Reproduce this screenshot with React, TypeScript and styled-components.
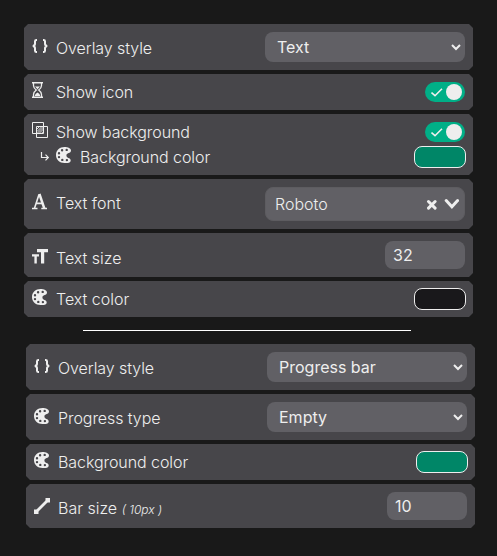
import React from "react";
import styled, { createGlobalStyle } from "styled-components";

const GlobalStyle = createGlobalStyle`
  * { box-sizing: border-box; }
  body { margin: 0; background: #191919; }
`;

const Page = styled.main`
  width: 497px;
  height: 556px;
  padding: 24px 22px 0 24px;
  overflow: hidden;
  background: #191919;
  color: #eee;
  font: 300 16px/24px Inter, sans-serif;
`;

const Panel = styled.section<{ $shift?: number }>`
  width: 449px;
  margin-left: ${(p) => p.$shift ?? 0}px;
  display: flex;
  flex-direction: column;
  gap: 4px;
`;

const Row = styled.div<{ $height: number }>`
  height: ${(p) => p.$height}px;
  padding: 0 8px;
  clip-path: polygon(4px 0, calc(100% - 4px) 0, 100% 4px, 100% calc(100% - 4px), calc(100% - 4px) 100%, 4px 100%, 0 calc(100% - 4px), 0 4px);
  background: #47464a;
`;

const Line = styled.div<{ $top?: number; $indent?: number }>`
  display: flex;
  align-items: flex-start;
  padding-top: ${(p) => p.$top ?? 0}px;
  padding-left: ${(p) => p.$indent ?? 0}px;
`;

const IconSlot = styled.span<{ $top?: number; $width?: number }>`
  flex: none;
  width: ${(p) => p.$width ?? 24}px;
  height: 16px;
  margin-top: ${(p) => p.$top ?? 0}px;
  svg { display: block; }
`;

const Label = styled.span<{ $top?: number; $tight?: boolean }>`
  flex: 1;
  margin-top: ${(p) => p.$top ?? 0}px;
  letter-spacing: ${(p) => (p.$tight ? "-0.07px" : "0")};
  white-space: pre;
`;

const Note = styled.em`
  font-size: 12px;
`;

const Field = styled.div<{ $width: number; $height: number; $light?: boolean }>`
  display: flex;
  align-items: center;
  flex: none;
  width: ${(p) => p.$width}px;
  height: ${(p) => p.$height}px;
  padding: 0 ${(p) => (p.$light ? 5 : 4)}px 0 ${(p) => (p.$light ? 9 : p.$width === 80 ? 8 : 12)}px;
  border-radius: 8px;
  border: ${(p) => (p.$light ? "1px solid #5d5c60" : "0")};
  background: #616065;
  font-weight: ${(p) => (p.$light ? 300 : 400)};
  span { flex: 1; }
`;

const Switch = styled.div`
  display: flex;
  align-items: center;
  justify-content: space-between;
  flex: none;
  width: 40px;
  height: 20px;
  padding: 0 3px 0 6px;
  border-radius: 10px;
  background: #00af87;
`;

const Knob = styled.i`
  width: 16px;
  height: 16px;
  border-radius: 50%;
  background: #eee;
`;

const Swatch = styled.div<{ $color: string }>`
  flex: none;
  width: 52px;
  height: 22px;
  margin-right: -1px;
  border: 1px solid #eee;
  border-radius: 8px;
  background: ${(p) => p.$color};
`;

const Divider = styled.hr`
  width: 328px;
  height: 1px;
  margin: 13px 0 13px 59px;
  border: 0;
  background: #fff;
`;

const Braces = () => (
  <svg width="16" height="16" viewBox="0 0 16 16" fill="none" stroke="#eee" strokeWidth="2">
    <path d="M5 1.9H4.500Q3 1.900 3 3.300V5.800Q3 7.700 .8 8Q3 8.300 3 10.200V12.700Q3 14.100 4.500 14.100H5M11 1.900h.5q1.500 0 1.500 1.400v2.500q0 1.900 2.200 2.200q-2.200.3-2.200 2.200v2.500q0 1.400-1.500 1.400H11" />
  </svg>
);

const Hourglass = () => (
  <svg width="12" height="16" viewBox="0 0 12 16" fill="none" stroke="#eee">
    <path d="M0 .8h11M0 15.200h11" strokeWidth="1.6" />
    <path d="M1.500 1v2.500Q1.500 6 4.300 8Q1.500 10 1.500 12.500V15M9.500 1v2.500Q9.500 6 6.700 8q2.800 2 2.800 4.500V15" strokeWidth="1.3" />
    <path d="M3 4.500h5L5.500 7.200zM2.700 14q.3-2.500 2.800-3.500q2.500 1 2.800 3.500z" fill="#eee" stroke="none" />
  </svg>
);

const Overlap = () => (
  <svg width="16" height="16" viewBox="0 0 16 16" fill="none" stroke="#eee">
    <path d="M.5.5h11v11H.5zM4.500 4.500h11v11h-11z" />
    <path d="M5 7l2-2M5 9.500L9.500 5M5 11.500L11.500 5M7 11.500L11.500 7M9.300 11.500l2.200-2.200" strokeWidth=".9" />
  </svg>
);

const SubArrow = () => (
  <svg width="10" height="11" viewBox="0 0 10 11" fill="none" stroke="#eee" strokeWidth="1.2">
    <path d="M1.500 0v5.500h6.500M5.500 2.700l2.800 2.800L5.500 8.300" />
  </svg>
);

const LetterA = () => (
  <svg width="16" height="17" viewBox="0 0 16 17" fill="none" stroke="#eee">
    <path d="M2.500 15.300L7 1.500M4.200 10.400h6.800" strokeWidth="1.6" />
    <path d="M7.400 1L12.300 15.300" strokeWidth="2.5" />
    <path d="M0 15.500h5.500M9.300 15.500H15" strokeWidth="1.7" />
  </svg>
);

const TextSize = () => (
  <svg width="16" height="16" viewBox="0 0 16 16" fill="#eee">
    <path d="M5 0h11v3.200h-3.800V14.500H9V3.200H5zM0 5.200h7v2.200H4.800V14.500H2.400V7.400H0z" />
  </svg>
);

const BarSize = () => (
  <svg width="16" height="16" viewBox="0 0 16 16" fill="#eee" stroke="#eee">
    <path d="M2.500 13.500L13.500 2.500" strokeWidth="2.800" />
    <path d="M11.500 0H16v4.500h-2.500L11.500 2.500zM0 11.500h2.500l2 2V16H0z" stroke="none" />
  </svg>
);

const Palette = () => (
  <svg width="16" height="16" viewBox="0 0 16 16">
    <path
      fill="#eee"
      fillRule="evenodd"
      d="M8.500 0C3.500 0 0 3.500 0 8s3.500 8 8.500 8h3.200c1.700 0 3-1.100 3-2.500 0-1.500-1.200-2.100-2.300-2.500-1.200-.5-2-1.300-2-2.500s.9-2 2.200-2.400c1.300-.4 2.400-1 2.400-2.500C15 1.300 12 0 8.500 0zM6.100 2.100a1.200 1.200 0 1 1 0 2.400 1.200 1.200 0 0 1 0-2.400zM10.700 1.700a1.200 1.200 0 1 1 0 2.400 1.200 1.200 0 0 1 0-2.400zM3 5.100a1.200 1.200 0 1 1 0 2.400 1.200 1.200 0 0 1 0-2.400zM3 8.900a1.200 1.200 0 1 1 0 2.400 1.200 1.200 0 0 1 0-2.400zM6.300 11.700a1.200 1.200 0 1 1 0 2.400 1.200 1.200 0 0 1 0-2.400zM10.900 11.900a1.200 1.200 0 1 1 0 2.400 1.200 1.200 0 0 1 0-2.400z"
    />
  </svg>
);

const SelectArrow = () => (
  <svg width="10" height="7" viewBox="0 0 10 7" fill="none" stroke="#eee" strokeWidth="2">
    <path d="M1 1l4 4 4-4" />
  </svg>
);

const Check = () => (
  <svg width="12" height="9" viewBox="0 0 12 9" fill="none" stroke="#eee" strokeWidth="1.6">
    <path d="M.5 4.500L4 7.700L11 .8" />
  </svg>
);

const ComboIcons = () => (
  <svg width="33" height="12" viewBox="0 0 33 12" fill="none" stroke="#eee" strokeLinecap="round">
    <path d="M2.500 3.500l6.600 6.600M9.100 3.500L2.500 10.100" strokeWidth="3" />
    <path d="M20.200 2.600l5.700 6.200 5.700-6.200" strokeWidth="3" />
  </svg>
);

const Toggle = () => (
  <Switch>
    <Check />
    <Knob />
  </Switch>
);

const Select = ({ value }: { value: string }) => (
  <Field $width={200} $height={30}>
    <span>{value}</span>
    <SelectArrow />
  </Field>
);

export default function App() {
  return (
    <>
      <GlobalStyle />
      <Page>
        <Panel>
          <Row $height={46}>
            <Line $top={8}>
              <IconSlot $top={6}><Braces /></IconSlot>
              <Label $top={4} $tight>Overlay style</Label>
              <Select value="Text" />
            </Line>
          </Row>
          <Row $height={36}>
            <Line $top={8}>
              <IconSlot><Hourglass /></IconSlot>
              <Label $top={-2} $tight>Show icon</Label>
              <Toggle />
            </Line>
          </Row>
          <Row $height={61}>
            <Line $top={8}>
              <IconSlot><Overlap /></IconSlot>
              <Label $top={-2} $tight>Show background</Label>
              <Toggle />
            </Line>
            <Line $top={2} $indent={8}>
              <IconSlot $top={6} $width={16}><SubArrow /></IconSlot>
              <IconSlot $top={1}><Palette /></IconSlot>
              <Label $top={-1} $tight>Background color</Label>
              <Swatch $color="#008667" />
            </Line>
          </Row>
          <Row $height={50}>
            <Line $top={8}>
              <IconSlot $top={6}><LetterA /></IconSlot>
              <Label $top={4}>Text font</Label>
              <Field $width={200} $height={34} $light>
                <span>Roboto</span>
                <ComboIcons />
              </Field>
            </Line>
          </Row>
          <Row $height={44}>
            <Line $top={8}>
              <IconSlot $top={8}><TextSize /></IconSlot>
              <Label $top={5}>Text size</Label>
              <Field $width={80} $height={28}><span>32</span></Field>
            </Line>
          </Row>
          <Row $height={36}>
            <Line $top={7}>
              <IconSlot $top={1}><Palette /></IconSlot>
              <Label $top={-1}>Text color</Label>
              <Swatch $color="#19181b" />
            </Line>
          </Row>
        </Panel>
        <Divider />
        <Panel $shift={2}>
          <Row $height={46}>
            <Line $top={8}>
              <IconSlot $top={6}><Braces /></IconSlot>
              <Label $top={4} $tight>Overlay style</Label>
              <Select value="Progress bar" />
            </Line>
          </Row>
          <Row $height={46}>
            <Line $top={8}>
              <IconSlot $top={6}><Palette /></IconSlot>
              <Label $top={4} $tight>Progress type</Label>
              <Select value="Empty" />
            </Line>
          </Row>
          <Row $height={36}>
            <Line $top={7}>
              <IconSlot $top={1}><Palette /></IconSlot>
              <Label $top={-1} $tight>Background color</Label>
              <Swatch $color="#008667" />
            </Line>
          </Row>
          <Row $height={44}>
            <Line $top={8}>
              <IconSlot $top={6}><BarSize /></IconSlot>
              <Label $top={4}>Bar size <Note>( 10px )</Note></Label>
              <Field $width={80} $height={28}><span>10</span></Field>
            </Line>
          </Row>
        </Panel>
      </Page>
    </>
  );
}
